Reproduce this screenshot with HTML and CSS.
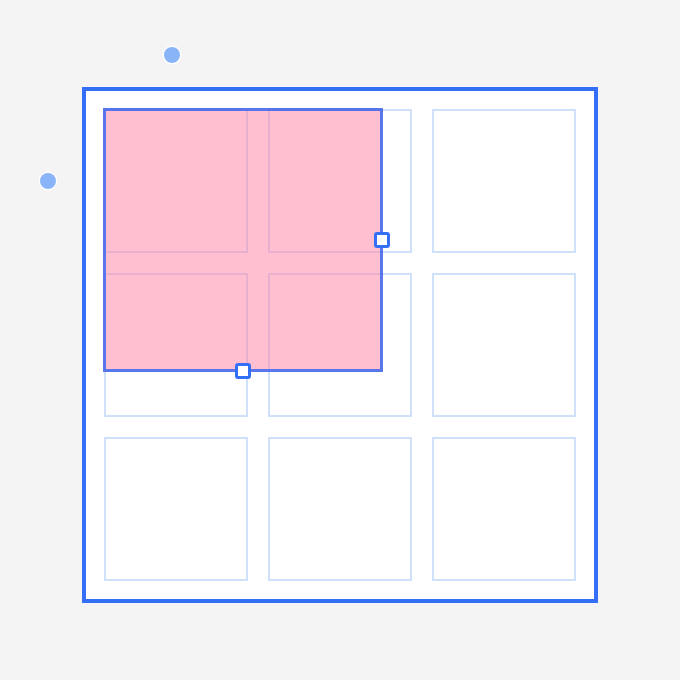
FILE: index.html
```html
<!DOCTYPE html>
<html lang="en">
<head>
  <meta charset="UTF-8">
  <title>Grid selection</title>
  <link rel="stylesheet" href="styles.css">
</head>
<body>
  <div class="stage">
    <span class="anchor anchor-top"></span>
    <span class="anchor anchor-left"></span>

    <div class="frame">
      <div class="grid">
        <div class="cell"></div>
        <div class="cell"></div>
        <div class="cell"></div>
        <div class="cell"></div>
        <div class="cell"></div>
        <div class="cell"></div>
        <div class="cell"></div>
        <div class="cell"></div>
        <div class="cell"></div>
      </div>

      <!-- selection box with resize handles -->
      <div class="selection">
        <span class="handle handle-right"></span>
        <span class="handle handle-bottom"></span>
      </div>
    </div>
  </div>
</body>
</html>
```

FILE: styles.css
```css
html, body {
  margin: 0;
  background: #f4f4f4;
}
.stage {
  position: relative;
  width: 680px;
  height: 680px;
  padding: 87px 0 0 82px;
  box-sizing: border-box;
}
.anchor {
  position: absolute;
  width: 16px;
  height: 16px;
  border-radius: 50%;
  background: #8ab4f8;
  box-shadow: 0 0 0 1.5px rgba(255, 255, 255, 0.9);
}
.anchor-top {
  left: 164px;
  top: 47px;
}
.anchor-left {
  left: 40px;
  top: 173px;
}
.frame {
  position: relative;
  width: 472px;
  padding: 18px;
  background: #fff;
  border: 4px solid #3370f7;
}
.grid {
  display: grid;
  grid-template-columns: repeat(3, 144px);
  grid-auto-rows: 144px;
  gap: 20px;
}
.cell {
  border: 2px solid #cfe0fa;
  box-sizing: border-box;
}
.selection {
  position: absolute;
  left: 17px;
  top: 17px;
  width: 280px;
  height: 264px;
  box-sizing: border-box;
  border: 3px solid rgba(60, 105, 240, 0.85);
  background: rgba(255, 128, 162, 0.5);
}
.handle {
  position: absolute;
  width: 16px;
  height: 16px;
  box-sizing: border-box;
  background: #fff;
  border: 3px solid #3370f7;
  border-radius: 3px;
}
.handle-right {
  left: 268px;
  top: 121px;
}
.handle-bottom {
  left: 129px;
  top: 252px;
}
```
